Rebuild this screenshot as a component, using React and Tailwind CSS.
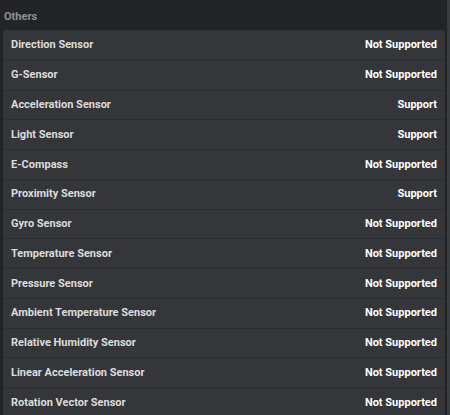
import React from 'react';

const sensors = [
  ['Direction Sensor', 'Not Supported'],
  ['G-Sensor', 'Not Supported'],
  ['Acceleration Sensor', 'Support'],
  ['Light Sensor', 'Support'],
  ['E-Compass', 'Not Supported'],
  ['Proximity Sensor', 'Support'],
  ['Gyro Sensor', 'Not Supported'],
  ['Temperature Sensor', 'Not Supported'],
  ['Pressure Sensor', 'Not Supported'],
  ['Ambient Temperature Sensor', 'Not Supported'],
  ['Relative Humidity Sensor', 'Not Supported'],
  ['Linear Acceleration Sensor', 'Not Supported'],
  ['Rotation Vector Sensor', 'Not Supported'],
];

export default function App() {
  return (
    <div
      className="flex h-[415px] w-[450px] overflow-hidden bg-[#232428]"
      style={{ fontFamily: 'Roboto, "Liberation Sans", sans-serif' }}
    >
      <div className="flex flex-1 flex-col">
        {/* Section header */}
        <div className="flex h-[30px] shrink-0 items-center pl-[4px] pt-[4px] text-[11px] font-bold text-[#8e8f93]">
          Others
        </div>

        {/* Sensor list */}
        <div className="ml-[3px] mr-[2px] shrink-0 rounded-t-[2px] bg-[#35363a]">
          {sensors.map(([name, status], i) => (
            <div
              key={name}
              className={`flex h-[29.75px] items-center justify-between pl-[8px] pr-[8px] pt-[1px] text-[11px] font-bold ${
                i > 0 ? 'border-t border-[#2d2e32]' : ''
              }`}
            >
              <span className="text-[#dcdcdc]">{name}</span>
              <span className="text-white">{status}</span>
            </div>
          ))}
        </div>
      </div>

      {/* Scrollbar track */}
      <div className="w-[3px] shrink-0 bg-[#3a3b3f]" />
    </div>
  );
}
